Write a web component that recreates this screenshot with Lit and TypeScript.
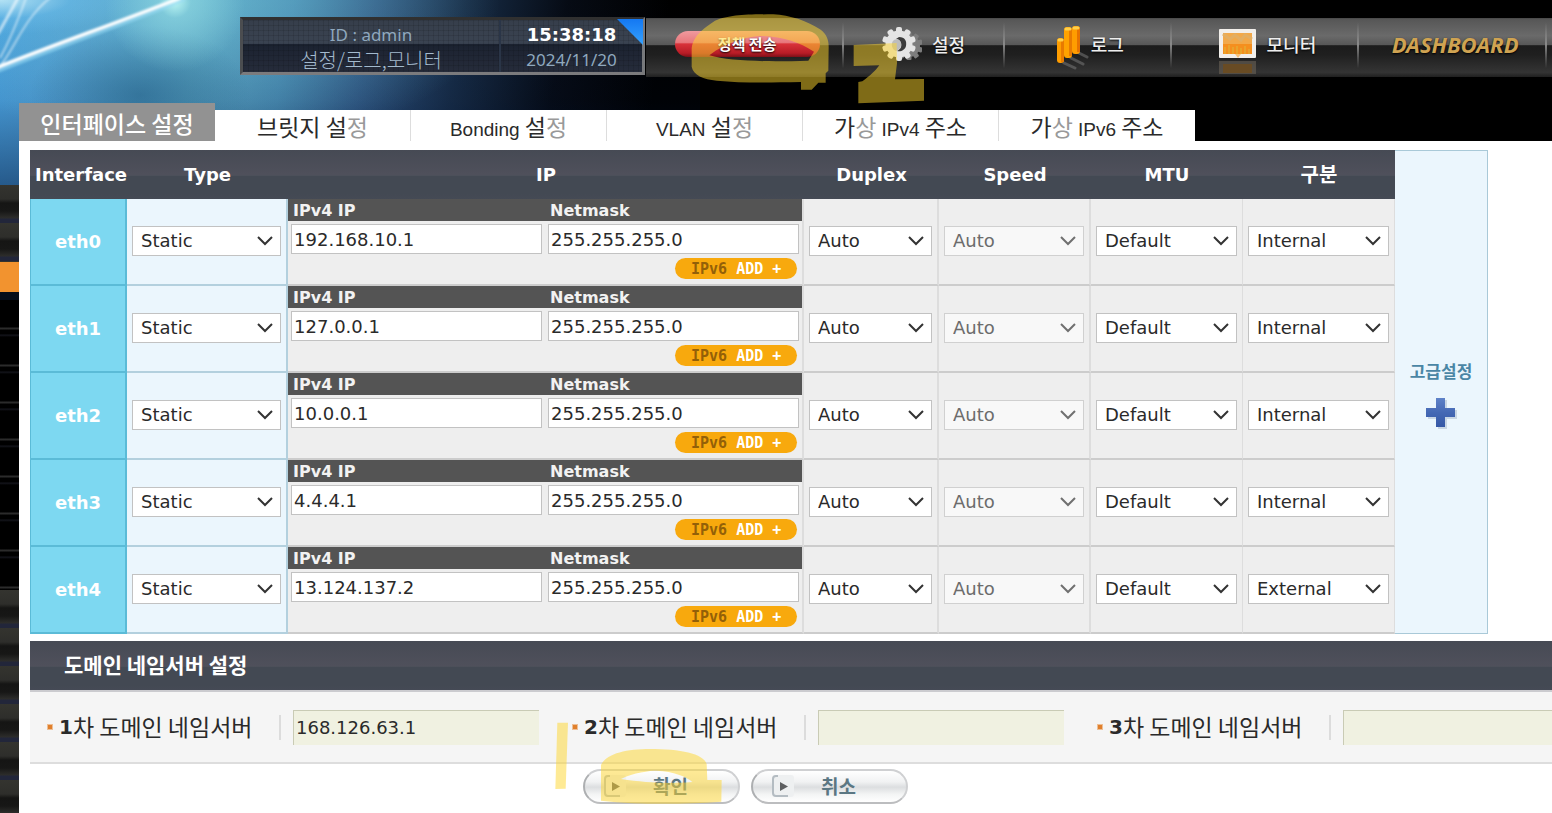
import { LitElement, html, css, svg } from "lit";
import { customElement, state } from "lit/decorators.js";

interface Nic {
  name: string;
  ip: string;
  mask: string;
  zone: string;
}

interface Part {
  text: string;
  kind?: "latin" | "faint";
}

const NICS: Nic[] = [
  { name: "eth0", ip: "192.168.10.1", mask: "255.255.255.0", zone: "Internal" },
  { name: "eth1", ip: "127.0.0.1", mask: "255.255.255.0", zone: "Internal" },
  { name: "eth2", ip: "10.0.0.1", mask: "255.255.255.0", zone: "Internal" },
  { name: "eth3", ip: "4.4.4.1", mask: "255.255.255.0", zone: "Internal" },
  { name: "eth4", ip: "13.124.137.2", mask: "255.255.255.0", zone: "External" },
];

const TABS: Part[][] = [
  [{ text: "인터페이스 설정" }],
  [{ text: "브릿지 설" }, { text: "정", kind: "faint" }],
  [{ text: "Bonding", kind: "latin" }, { text: " 설" }, { text: "정", kind: "faint" }],
  [{ text: "VLAN", kind: "latin" }, { text: " 설" }, { text: "정", kind: "faint" }],
  [{ text: "가" }, { text: "상", kind: "faint" }, { text: " " }, { text: "IPv4", kind: "latin" }, { text: " 주소" }],
  [{ text: "가" }, { text: "상", kind: "faint" }, { text: " " }, { text: "IPv6", kind: "latin" }, { text: " 주소" }],
];

const DNS = [
  { n: "1", value: "168.126.63.1" },
  { n: "2", value: "" },
  { n: "3", value: "" },
];

const teeth = [0, 36, 72, 108, 144, 180, 216, 252, 288, 324];

const gearIcon = html`<svg class="ico-gear" viewBox="0 0 40 36" aria-hidden="true">
  <g fill="#7d7d7d">
    <circle cx="27" cy="20" r="11" />
    ${teeth.map((a) => svg`<rect x="24.5" y="6" width="5" height="6" rx="1" transform="rotate(${a} 27 20)" />`)}
  </g>
  <g fill="#e4e4e4">
    <circle cx="17" cy="18" r="13.500" />
    ${teeth.map((a) => svg`<rect x="14" y="1" width="6" height="6" rx="2" transform="rotate(${a} 17 18)" />`)}
  </g>
  <path d="M17 11c6 0 8 4 7 9c-1 4-5 6-9 5c4-2 5-5 4-8c-1-2-2-4-5-4z" fill="#3c3c3c" />
  <path d="M12 14c4-2 8 1 7 5c0 3-2 5-5 6c-4-1-6-8-2-11z" fill="#bdbdbd" />
</svg>`;

const logIcon = html`<svg class="ico-log" viewBox="0 0 32 44" aria-hidden="true">
  <g stroke="#777" stroke-width="3" opacity=".55" stroke-linecap="round">
    <path d="M7 37l11 5M14 32l12 6M22 27l8 4" />
  </g>
  <rect x="0" y="12" width="7" height="25" rx="3" fill="#ff9d00" />
  <rect x="4" y="14" width="3" height="22" fill="#e87a00" />
  <rect x="7" y="1" width="8" height="31" rx="3" fill="#ffa200" />
  <rect x="12" y="3" width="3" height="27" fill="#e87a00" />
  <rect x="15" y="0" width="8" height="28" rx="3" fill="#ff9d00" />
  <rect x="20" y="2" width="3" height="24" fill="#e87300" />
  <path d="M2 14h3M9 3h4M17 2h4" stroke="#ffcf4a" stroke-width="3" stroke-linecap="round" />
</svg>`;

const monitorIcon = html`<svg class="ico-mon" viewBox="0 0 38 46" aria-hidden="true">
  <rect x="0" y="0" width="37" height="29" rx="1" fill="#f2efeb" />
  <rect x="4" y="4" width="29" height="21" fill="#f2a94a" />
  <rect x="4" y="15" width="29" height="10" fill="#f58f1e" />
  <path d="M4 5l7 5l5-4l6 5l4-5l7 4" stroke="#e3ae62" stroke-width="3" fill="none" />
  <path d="M6 25v-7M10 25v-9M14 25v-7M18 25v-8M22 25v-6M26 25v-8M30 25v-5" stroke="#e9a42c" stroke-width="2" />
  <path d="M16 25h6l-3 4z" fill="#f7c27b" />
  <rect x="0" y="32" width="37" height="13" fill="#6b6257" opacity=".6" />
  <rect x="4" y="35" width="29" height="9" fill="#6e4b1c" opacity=".8" />
</svg>`;

const arrowIcon = html`<svg class="ico-arrow" viewBox="0 0 24 24" aria-hidden="true">
  <rect x="1" y="1" width="22" height="22" rx="3" fill="#eef0f1" />
  <path d="M2 19V5a3 3 0 0 1 3-3h2M2 19a3 3 0 0 0 3 3h12" stroke="#b4bcc2" stroke-width="2" fill="none" />
  <path d="M9 8l8 4.500l-8 4.500z" fill="#5d5f61" />
</svg>`;

@customElement("app-root")
export class AppRoot extends LitElement {
  @state() private activeTab = 0;

  static styles = css`
    :host {
      display: block;
      --ui: "DejaVu Sans", "Noto Sans CJK KR", sans-serif;
      --kr: "Noto Sans CJK KR", sans-serif;
      --bar: linear-gradient(#464a54 0, #4f505b 50%, #565761 51%, #434953 53%, #434953 90%, #454a55 100%);
    }
    *, *::before { box-sizing: border-box; }
    .page {
      position: relative;
      min-height: 100vh;
      display: flex;
      flex-direction: column;
      overflow: hidden;
      background: #000;
      font: 18px var(--ui);
      color: #2a2a2a;
    }
    button, input, select { font: inherit; color: inherit; margin: 0; }
    button { cursor: pointer; border: 0; background: none; padding: 0; }

    .sky {
      position: absolute;
      left: 0;
      top: 0;
      width: 700px;
      height: 185px;
      background:
        radial-gradient(circle at 175px 2px, rgba(190, 248, 244, 0.95) 0, rgba(150, 222, 228, 0.55) 16px, rgba(140, 214, 222, 0) 70px),
        radial-gradient(ellipse at 0 0, rgba(190, 232, 246, 0.9) 0, rgba(110, 190, 235, 0.4) 70px, rgba(80, 160, 220, 0) 130px),
        radial-gradient(ellipse 110px 70px at 140px 95px, rgba(30, 88, 128, 0.55) 0, rgba(40, 100, 140, 0) 100%),
        radial-gradient(ellipse 300px 150px at 200px 0, rgba(120, 205, 222, 0.55) 0, rgba(100, 190, 215, 0) 100%),
        linear-gradient(rgba(0, 20, 60, 0) 0, rgba(0, 20, 60, 0.1) 100px, rgba(0, 20, 60, 0.5) 185px),
        linear-gradient(100deg, #4aa4e2 0, #4f9bd0 90px, #4f97ba 200px, #3f7ea8 290px, #2c527e 370px, #172c46 460px, #060b14 560px, #000 660px);
    }
    .rays { position: absolute; left: 0; top: 0; width: 240px; height: 90px; }
    .rail {
      position: absolute;
      left: 0;
      top: 185px;
      bottom: 0;
      width: 19px;
      display: flex;
      flex-direction: column;
    }
    .carbon {
      background: repeating-linear-gradient(#34342f 0, #2e2e2b 14px, #151514 18px, #171716 26px, #2d2d2b 33px, #22263a 34px, #22263a 38px);
    }
    .rail-a { height: 77px; }
    .rail-b { height: 30px; background: #f2932f; }
    .rail-c { height: 298px; border-top: 8px solid #060e1a; background: repeating-linear-gradient(#000 0, #000 27px, #2b2b2b 28px, #2b2b2b 29px, #000 30px, #000 34px, #15161d 35px, #000 37px); }
    .rail-d { flex: 1; }

    header { position: relative; display: flex; padding: 17px 0 0 240px; height: 103px; align-items: flex-start; }
    .status {
      position: relative;
      width: 405px;
      height: 58px;
      flex: none;
      display: grid;
      grid-template-columns: 256px 1fr;
      border: 3px solid;
      border-color: #303030 #77797c #7b7b7d #4b4d50;
      background:
        repeating-linear-gradient(90deg, rgba(0, 0, 0, 0.1) 0, rgba(0, 0, 0, 0.1) 1px, transparent 1px, transparent 5px),
        repeating-linear-gradient(rgba(0, 0, 0, 0.1) 0, rgba(0, 0, 0, 0.1) 1px, transparent 1px, transparent 5px),
        linear-gradient(#363e4b 0, #3a4351 45%, #1b2230 47%, #262c3b 100%);
      font: 17px/25px "Noto Sans", var(--kr);
      color: #8fa8be;
      text-align: center;
      box-shadow: 1px 0 0 #000;
    }
    .status div { padding-top: 2px; }
    .status div + div { border-left: 2px solid #2a3547; }
    .status span, .status strong { display: block; }
    .status .role { font: 300 20px/25px var(--kr); color: #a3bace; }
    .status strong { font: bold 18px/25px var(--ui); color: #fff; }
    .corner { position: absolute; right: -1px; top: -1px; width: 26px; height: 26px; background: linear-gradient(#1478f2, #35a2ff); clip-path: polygon(0 0, 100% 0, 100% 100%); }

    nav {
      flex: 1;
      min-width: 0;
      margin: 1px 0 0 1px;
      height: 59px;
      display: flex;
      padding-right: 5px;
      background: linear-gradient(#474747 0, #575757 3%, #6a6a6a 30%, #585858 45%, #1c1c1c 47%, #1f1f1f 62%, #343434 92%, #202020 100%);
    }
    nav a {
      flex: 165 1 0;
      min-width: 0;
      height: 52px;
      display: flex;
      align-items: center;
      justify-content: center;
      gap: 10px;
      padding-left: 6px;
      color: #eee;
      text-decoration: none;
      font: 500 18px/22px var(--kr);
      white-space: nowrap;
      border-right: 2px solid;
      border-image: linear-gradient(transparent 10%, #8a8a8a 50%, transparent 95%) 1;
      text-shadow: 0 1px 2px #000;
    }
    nav a:nth-child(2) { padding-left: 0; }
    nav .wide { flex-grow: 187; }
    nav .first { flex-grow: 198; }
    .pill {
      width: 145px;
      height: 26px;
      border-radius: 13px;
      text-align: center;
      font: bold 15px/25px var(--kr);
      color: #fff;
      background: linear-gradient(#f09a9e 0, #e8787d 44%, #d8323a 50%, #b81c26 85%, #7c1018 100%);
    }
    .dash { font: italic bold 22px/24px "Noto Sans", sans-serif; color: #cfa352; }
    .ico-gear { width: 40px; height: 36px; }
    .ico-log { width: 32px; height: 44px; margin: 8px -8px 0 0; }
    .ico-mon { width: 38px; height: 46px; margin-top: 16px; }

    .tabs { position: relative; display: flex; align-items: flex-end; padding-left: 19px; height: 38px; }
    .tab {
      width: 196px;
      height: 31px;
      background: #fff;
      border-right: 1px solid #ddd;
      font: 23px/31px var(--kr);
      padding-top: 1px;
      white-space: nowrap;
    }
    .tab:last-child { border-right: 0; }
    .tab.on { height: 38px; background: #929292; color: #fff; font-weight: 500; border: 0; padding-top: 3px; }
    .latin { font: 19px/27px "Liberation Sans", sans-serif; }
    .faint { color: #999; }

    main { position: relative; flex: 1; margin-left: 19px; background: #fff; padding: 9px 0 8px; }
    .board { display: flex; margin: 0 64px 0 11px; }
    table { flex: 1; min-width: 0; border-collapse: separate; border-spacing: 0; table-layout: fixed; }
    .c-if { width: 97px; }
    .c-type { width: 161px; }
    .c-ip { width: 516px; }
    .c-dup { width: 135px; }
    .c-std { width: 152px; }
    th, td { padding: 0; }
    thead { background: var(--bar); }
    thead th { height: 49px; font-size: 18px; color: #fff; }
    thead th:first-child { padding-left: 5px; }
    thead .kr { font: bold 20px/24px var(--kr); padding-bottom: 2px; }
    tbody th { height: 87px; background: #7dd8f1; color: #fff; border: solid #5bbbd7; border-width: 0 2px 2px 1px; }
    tbody td { background: #eee; border: solid #ddd; border-width: 0 2px 2px 0; border-bottom-color: #ccc; padding: 0 5px 2px; vertical-align: middle; }
    tbody td.type { background: #ebf6fd; border-color: #b3d0de; }
    tbody td.thin { border-right-width: 1px; }
    tbody td.ip { padding: 0; vertical-align: top; }
    select {
      display: block;
      width: 100%;
      height: 30px;
      padding: 0 26px 0 8px;
      appearance: none;
      border: 1px solid #c2c2c2;
      border-radius: 0;
      background: #fff url("data:image/svg+xml,%3Csvg xmlns='http://www.w3.org/2000/svg' width='16' height='10'%3E%3Cpath d='M1 1l7 7l7-7' fill='none' stroke='%23333' stroke-width='2'/%3E%3C/svg%3E") no-repeat right 7px center;
    }
    select:disabled { opacity: 1; color: #6c6c6c; background-color: #f8f8f8; border-color: #d0d0d0; background-image: url("data:image/svg+xml,%3Csvg xmlns='http://www.w3.org/2000/svg' width='16' height='10'%3E%3Cpath d='M1 1l7 7l7-7' fill='none' stroke='%23707070' stroke-width='2'/%3E%3C/svg%3E"); }
    .pair { display: grid; grid-template-columns: 1fr 1fr; gap: 6px; padding: 0 3px; }
    .caps { height: 22px; background: #545454; color: #f2f2f2; font: bold 16px/20px var(--ui); margin-bottom: 3px; }
    .caps label { padding: 2px 0 0 2px; }
    .pair input { width: 100%; min-width: 0; height: 30px; border: 1px solid #c2c2c2; padding: 0 2px; background: #fff; }
    .add {
      display: block;
      margin: 4px 5px 0 auto;
      width: 122px;
      height: 21px;
      border-radius: 11px;
      background: #f8a90d;
      font: bold 15px/22px "DejaVu Sans Mono", monospace;
      color: #fff;
      text-align: left;
      padding-left: 16px;
      white-space: pre;
    }
    .add b { color: #936008; }

    .advanced {
      flex: none;
      width: 93px;
      display: flex;
      flex-direction: column;
      align-items: center;
      justify-content: center;
      gap: 14px;
      padding-top: 3px;
      background: #ebf6fd;
      border: 1px solid #a9c9d8;
      border-left: 0;
      font: bold 17px/24px var(--kr);
      color: #4a86a5;
    }
    .advanced svg { width: 32px; height: 32px; }

    h2 { margin: 7px 0 0 11px; padding-left: 34px; height: 49px; font: bold 21px/47px var(--kr); color: #fff; background: var(--bar); }
    .dns { margin-left: 11px; display: flex; overflow: hidden; height: 74px; background: #f5f5f5; border-top: 2px solid #cbcbcf; border-bottom: 2px solid #ddd; }
    .dns div { flex: 0 0 525px; display: flex; align-items: center; padding-left: 17px; }
    .dns label { width: 234px; height: 25px; display: flex; align-items: center; border-right: 2px solid #dcdcdc; font: 23px/25px var(--kr); white-space: nowrap; }
    .dns label span { padding-bottom: 2px; }
    .dns label::before { content: ""; width: 6px; height: 6px; margin-right: 6px; background: #e0802c; border: 1px solid #eebf95; }
    .dns label b { font: bold 20px/25px var(--ui); }
    .dns input { width: 246px; height: 35px; margin-left: 12px; padding: 0 2px; border: solid #c9cbb5; border-width: 1px 0 0 1px; background: #f0f1e1; }

    .actions { display: flex; justify-content: center; gap: 11px; padding: 5px 80px 0 0; }
    .actions button {
      width: 157px;
      height: 35px;
      display: flex;
      align-items: center;
      gap: 26px;
      padding: 0 0 2px 18px;
      border-radius: 18px;
      border: 2px solid #cfd0d2;
      border-left-color: #adafb1;
      border-bottom-color: #bcbdbf;
      background: linear-gradient(#fff 0, #f1f2f3 35%, #dcdee0 52%, #f3f4f4 75%, #fff 100%);
      font: bold 19px/24px var(--kr);
      color: #5b7783;
    }
    .ico-arrow { width: 24px; height: 24px; }

    .marker { position: absolute; fill: #fed62e; opacity: 0.5; pointer-events: none; }
    .marker-top { left: 640px; top: 0; width: 300px; height: 110px; }
    .marker-low { left: 540px; top: 710px; width: 200px; height: 100px; }
  `;

  private pick(label: string, value: string, disabled = false) {
    return html`<select aria-label=${label} ?disabled=${disabled}><option>${value}</option></select>`;
  }

  private row(n: Nic) {
    return html`<tr>
      <th scope="row">${n.name}</th>
      <td class="type">${this.pick("Type", "Static")}</td>
      <td class="ip">
        <div class="pair caps">
          <label for="${n.name}-ip">IPv4 IP</label>
          <label for="${n.name}-mask">Netmask</label>
        </div>
        <div class="pair">
          <input id="${n.name}-ip" .value=${n.ip} />
          <input id="${n.name}-mask" .value=${n.mask} />
        </div>
        <button class="add"><b>IPv6</b> ADD +</button>
      </td>
      <td>${this.pick("Duplex", "Auto")}</td>
      <td>${this.pick("Speed", "Auto", true)}</td>
      <td class="thin">${this.pick("MTU", "Default")}</td>
      <td class="thin">${this.pick("구분", n.zone)}</td>
    </tr>`;
  }

  render() {
    return html`<div class="page">
      <div class="sky"></div>
      <svg class="rays" viewBox="0 0 240 90" aria-hidden="true">
        <defs><filter id="soft"><feGaussianBlur stdDeviation="1.2" /></filter></defs>
        <g fill="none" stroke="#fff" filter="url(#soft)">
          <path d="M-4 70C50 48 120 24 184 -2" stroke="#9adcf5" stroke-width="7" opacity=".6" />
          <path d="M-4 68C50 46 120 22 180 -2" stroke-width="3.500" />
          <path d="M0 66C14 50 24 18 50 -2M0 58C10 40 18 20 26 -2" stroke-width="2" opacity=".5" />
          <path d="M-2 34L18 -2" stroke-width="3" opacity=".6" />
        </g>
      </svg>
      <div class="rail">
        <div class="carbon rail-a"></div>
        <div class="rail-b"></div>
        <div class="rail-c"></div>
        <div class="carbon rail-d"></div>
      </div>

      <header>
        <div class="status">
          <div><span>ID : admin</span><span class="role">설정/로그,모니터</span></div>
          <div><strong>15:38:18</strong><span>2024/11/20</span></div>
          <i class="corner"></i>
        </div>
        <nav>
          <a class="first" href="#apply"><span class="pill">정책 전송</span></a>
          <a href="#settings">${gearIcon}<span>설정</span></a>
          <a href="#log">${logIcon}<span>로그</span></a>
          <a class="wide" href="#monitor">${monitorIcon}<span>모니터</span></a>
          <a class="wide" href="#dashboard"><span class="dash">DASHBOARD</span></a>
        </nav>
      </header>

      <div class="tabs" role="tablist">
        ${TABS.map(
          (parts, i) => html`<button
            role="tab"
            aria-selected=${i === this.activeTab}
            class=${i === this.activeTab ? "tab on" : "tab"}
            @click=${() => (this.activeTab = i)}
          >${parts.map((p) => (p.kind ? html`<span class=${p.kind}>${p.text}</span>` : p.text))}</button>`
        )}
      </div>

      <main>
        <div class="board">
          <table>
            <colgroup>
              <col class="c-if" /><col class="c-type" /><col class="c-ip" /><col class="c-dup" />
              <col class="c-std" /><col class="c-std" /><col class="c-std" />
            </colgroup>
            <thead>
              <tr>
                <th>Interface</th><th>Type</th><th>IP</th><th>Duplex</th><th>Speed</th><th>MTU</th><th class="kr">구분</th>
              </tr>
            </thead>
            <tbody>${NICS.map((n) => this.row(n))}</tbody>
          </table>
          <button class="advanced">
            <span>고급설정</span>
            <svg viewBox="0 0 32 32" aria-hidden="true">
              <defs>
                <linearGradient id="plus" x1="0" y1="0" x2="0" y2="1">
                  <stop offset="0" stop-color="#5e82c8" /><stop offset=".5" stop-color="#4468b4" /><stop offset="1" stop-color="#3558a6" />
                </linearGradient>
              </defs>
              <path d="M13 3h9v10h10v9H22v10h-9V22H3v-9h10z" fill="#b9c9d8" opacity=".7" />
              <path d="M11 1h9v10h10v9H20v10h-9V20H1v-9h10z" fill="url(#plus)" />
            </svg>
          </button>
        </div>

        <h2>도메인 네임서버 설정</h2>
        <div class="dns">
          ${DNS.map(
            (d) => html`<div>
              <label for="dns${d.n}"><b>${d.n}</b><span>차 도메인 네임서버</span></label>
              <input id="dns${d.n}" .value=${d.value} />
            </div>`
          )}
        </div>

        <div class="actions">
          <button>${arrowIcon}<span>확인</span></button>
          <button>${arrowIcon}<span>취소</span></button>
        </div>
      </main>

      <svg class="marker marker-top" viewBox="0 0 900 330" aria-hidden="true">
        <path fill-rule="evenodd" d="M155 200V150C156 110 190 85 225 62C270 45 310 43 400 43C450 46 500 62 540 88C560 102 566 120 566 140L565 212L557 220V248H535L515 269H483V246C380 248 300 249 230 242C190 238 160 225 155 200ZM208 166C260 125 320 110 360 108C430 110 480 128 522 155L505 182C380 186 270 184 208 166Z" />
        <path d="M641 135L770 129L771 190L765 238L852 237V302L655 310V246L667 244C690 228 710 208 718 196L641 198Z" />
      </svg>
      <svg class="marker marker-low" viewBox="0 240 600 300" aria-hidden="true">
        <path d="M52 278H84L77 476L46 477Z" />
        <path fill-rule="evenodd" d="M183 512V405C200 370 260 357 330 357C420 357 490 370 500 402L502 450H545L544 515C430 523 300 525 183 512ZM243 447C280 427 330 422 350 422C400 424 440 440 457 456C380 462 320 458 243 447Z" />
      </svg>
    </div>`;
  }
}
